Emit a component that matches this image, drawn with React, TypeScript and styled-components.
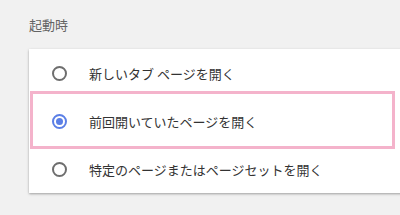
import React from "react";
import styled, { createGlobalStyle } from "styled-components";

const Global = createGlobalStyle`
  html, body { margin: 0; padding: 0; background: #f1f1f1; overflow: hidden; }
  body { font-family: "Noto Sans CJK JP", "Noto Sans", sans-serif; }
`;

const Page = styled.div`
  width: 400px;
  height: 215px;
  padding: 15px 0 0 29px;
  box-sizing: border-box;
  overflow: hidden;
`;

const Heading = styled.div`
  font-size: 13px;
  line-height: 20px;
  color: #646464;
  margin-bottom: 14px;
`;

const Card = styled.div`
  position: relative;
  width: 400px;
  background: #fff;
  box-shadow: 0 1px 2px rgba(0, 0, 0, 0.28), 0 1px 4px rgba(0, 0, 0, 0.08);
`;

const Row = styled.div`
  height: 48px;
  display: flex;
  align-items: center;
  padding-left: 23px;
  gap: 22px;
  font-size: 13px;
  color: #333;
`;

const Radio = styled.span<{ $checked?: boolean }>`
  width: 15px;
  height: 15px;
  box-sizing: border-box;
  border-radius: 50%;
  border: 2px solid ${(p) => (p.$checked ? "#5b7fe6" : "#6e6e6e")};
  display: flex;
  align-items: center;
  justify-content: center;
  flex-shrink: 0;
  &::after {
    content: "";
    display: ${(p) => (p.$checked ? "block" : "none")};
    width: 7px;
    height: 7px;
    border-radius: 50%;
    background: #5b7fe6;
  }
`;

const Highlight = styled.div`
  position: absolute;
  left: 1px;
  top: 42px;
  width: 365px;
  height: 58px;
  box-sizing: border-box;
  border: 3px solid #f4b3cb;
  pointer-events: none;
`;

const options = [
  { label: "新しいタブ ページを開く", checked: false },
  { label: "前回開いていたページを開く", checked: true },
  { label: "特定のページまたはページセットを開く", checked: false },
];

export default function App() {
  return (
    <>
      <Global />
      <Page>
        <Heading>起動時</Heading>
        <Card>
          {options.map((o) => (
            <Row key={o.label}>
              <Radio $checked={o.checked} />
              <span>{o.label}</span>
            </Row>
          ))}
          <Highlight />
        </Card>
      </Page>
    </>
  );
}
